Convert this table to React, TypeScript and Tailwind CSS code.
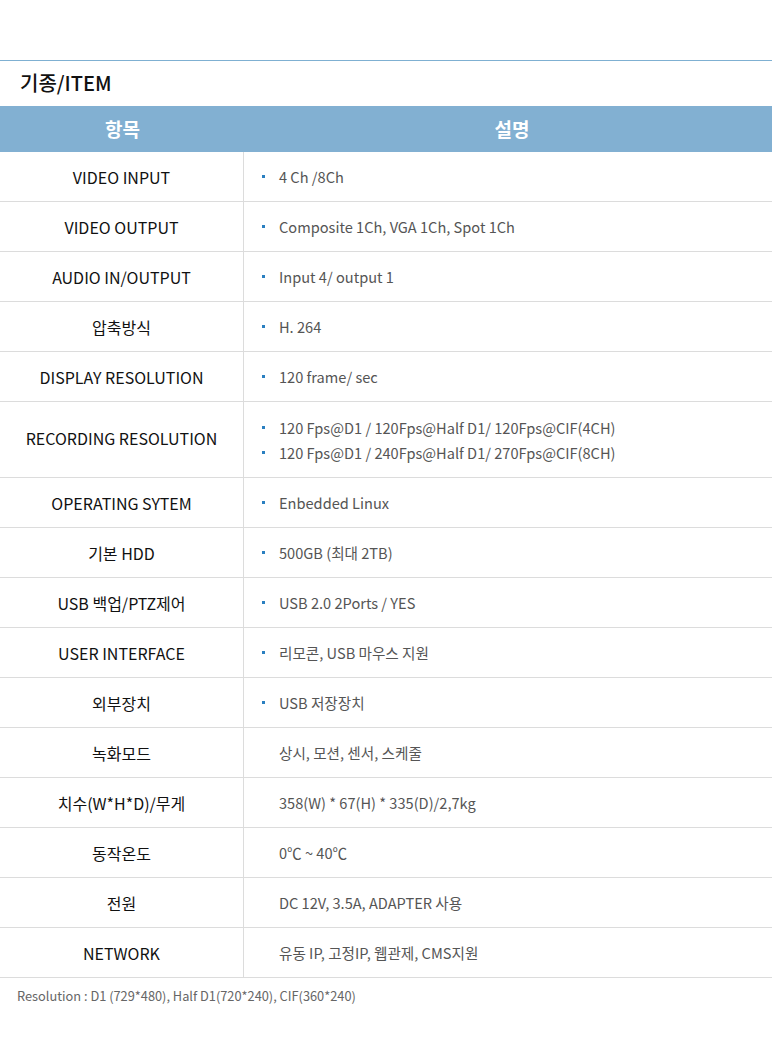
import React from "react";

type Row = { label: string; items: string[]; bullet: boolean; tall?: boolean };

const rows: Row[] = [
  { label: "VIDEO INPUT", items: ["4 Ch /8Ch"], bullet: true },
  { label: "VIDEO OUTPUT", items: ["Composite 1Ch, VGA 1Ch, Spot 1Ch"], bullet: true },
  { label: "AUDIO IN/OUTPUT", items: ["Input 4/ output 1"], bullet: true },
  { label: "압축방식", items: ["H. 264"], bullet: true },
  { label: "DISPLAY RESOLUTION", items: ["120 frame/ sec"], bullet: true },
  {
    label: "RECORDING RESOLUTION",
    items: [
      "120 Fps@D1 / 120Fps@Half D1/ 120Fps@CIF(4CH)",
      "120 Fps@D1 / 240Fps@Half D1/ 270Fps@CIF(8CH)",
    ],
    bullet: true,
    tall: true,
  },
  { label: "OPERATING SYTEM", items: ["Enbedded Linux"], bullet: true },
  { label: "기본 HDD", items: ["500GB (최대 2TB)"], bullet: true },
  { label: "USB 백업/PTZ제어", items: ["USB 2.0 2Ports / YES"], bullet: true },
  { label: "USER INTERFACE", items: ["리모콘, USB 마우스 지원"], bullet: true },
  { label: "외부장치", items: ["USB 저장장치"], bullet: true },
  { label: "녹화모드", items: ["상시, 모션, 센서, 스케줄"], bullet: false },
  { label: "치수(W*H*D)/무게", items: ["358(W) * 67(H) * 335(D)/2,7kg"], bullet: false },
  { label: "동작온도", items: ["0℃ ~ 40℃"], bullet: false },
  { label: "전원", items: ["DC 12V, 3.5A, ADAPTER 사용"], bullet: false },
  { label: "NETWORK", items: ["유동 IP, 고정IP, 웹관제, CMS지원"], bullet: false },
];

export default function App() {
  return (
    <div
      className="w-[772px] bg-white"
      style={{ fontFamily: '"Noto Sans CJK KR", "Noto Sans", sans-serif' }}
    >
      <div className="h-[60px]" />
      <div className="border-t border-[#7fb0d2] h-[46px] flex items-center pl-[20px]">
        <span className="text-[20px] leading-none text-[#111] font-medium pb-[1px]">기종/ITEM</span>
      </div>
      <div className="flex h-[46px] bg-[#82b0d2] text-white text-[19px] font-bold">
        <div className="w-[244px] flex items-center justify-center pl-[1px]">항목</div>
        <div className="flex-1 flex items-center justify-center pl-[8px]">설명</div>
      </div>
      <div>
        {rows.map((r, i) => (
          <div
            key={i}
            className={`flex border-b border-[#dcdcdc] ${r.tall ? "h-[76px]" : "h-[50px]"}`}
          >
            <div
              className={`w-[244px] border-r border-[#dcdcdc] flex items-center justify-center text-[16px] text-[#111] leading-none ${r.tall ? "pb-[4px]" : ""}`}
            >
              {r.label}
            </div>
            <div className="flex-1 flex flex-col justify-center pl-[35px] text-[14.6px] text-[#555]">
              {r.items.map((t, j) => (
                <div key={j} className="relative leading-[25px]">
                  {r.bullet && (
                    <span className="absolute left-[-17px] top-[11px] w-[3px] h-[3px] bg-[#2a7fc0]" />
                  )}
                  {t}
                </div>
              ))}
            </div>
          </div>
        ))}
      </div>
      <div className="pl-[17px] pt-[9px] text-[12.8px] text-[#666] leading-[18px]">
        Resolution : D1 (729*480), Half D1(720*240), CIF(360*240)
      </div>
    </div>
  );
}
